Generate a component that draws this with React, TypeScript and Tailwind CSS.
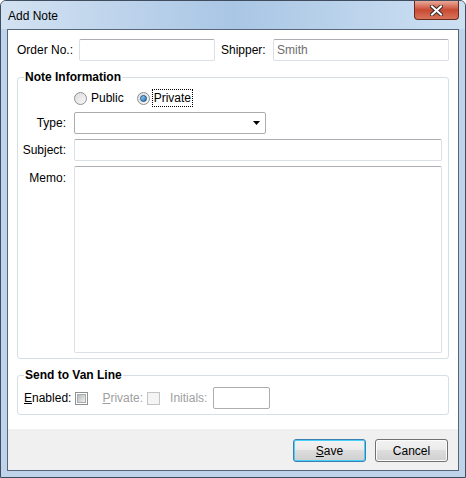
import React from "react";

const font = { fontFamily: '"Liberation Sans", Arial, sans-serif' };

function TextBox({ className = "", value = "", muted = false }: { className?: string; value?: string; muted?: boolean }) {
  return (
    <div
      className={`flex items-center rounded-[2px] border border-[#dbdfe6] border-t-[#abadb3] bg-white pl-[3px] ${
        muted ? "text-[#6d6d6d]" : "text-black"
      } ${className}`}
    >
      {value}
    </div>
  );
}

function Radio({ checked }: { checked?: boolean }) {
  return (
    <span className="flex h-[13px] w-[13px] items-center justify-center rounded-full border border-[#8e8f8f] bg-gradient-to-br from-[#dcdcdc] to-[#f8f8f8]">
      {checked ? (
        <span className="h-[7px] w-[7px] rounded-full border border-[#1b4f7f] bg-gradient-to-br from-[#9fd8f8] to-[#1f6fb0]" />
      ) : null}
    </span>
  );
}

function Check({ disabled }: { disabled?: boolean }) {
  return (
    <span
      className={`flex h-[13px] w-[13px] items-center justify-center border ${
        disabled ? "border-[#c4c4c4] bg-[#f4f4f4]" : "border-[#8e8f8f] bg-white"
      }`}
    >
      {disabled ? null : (
        <span className="h-[9px] w-[9px] border border-[#a8abad] bg-gradient-to-br from-[#b8bbbd] to-[#f0f0f0]" />
      )}
    </span>
  );
}

function Button({ children, isDefault }: { children: React.ReactNode; isDefault?: boolean }) {
  return (
    <button
      type="button"
      className={`relative h-[23px] w-[73px] rounded-[3px] border text-[12px] text-black ${
        isDefault ? "border-[#3c7fb1]" : "border-[#707070]"
      }`}
      style={{
        background: "linear-gradient(#f2f2f2 0%, #ebebeb 45%, #dddddd 50%, #cfcfcf 100%)",
        boxShadow: isDefault ? "inset 0 0 0 1px #48d0f8" : "inset 0 0 0 1px #fcfcfc",
      }}
    >
      {children}
    </button>
  );
}

export default function App() {
  return (
    <div className="h-[478px] w-[466px] bg-white text-[12px] leading-[14px]" style={font}>
      <div className="flex h-[478px] w-[466px] flex-col rounded-t-[6px] border border-[#3f4d5e] bg-[#bfd4eb]">
        {/* title bar */}
        <div className="flex h-[28px] shrink-0 items-start rounded-t-[5px] bg-gradient-to-r from-[#d3e2f2] via-[#a9c6e5] to-[#cde0f2]">
          <span className="ml-[7px] mt-[8px] text-[12px] text-black">Add Note</span>
          <div className="ml-auto mr-[6px] flex h-[19px] w-[45px] items-center justify-center rounded-b-[4px] border border-t-0 border-[#6b2a1e] bg-gradient-to-b from-[#e9a99b] via-[#c84a32] to-[#d8735b]">
            <svg width="13" height="11" viewBox="0 0 13 11">
              <path d="M2 1.5 L11 9.5 M11 1.5 L2 9.5" stroke="#3a2a28" strokeWidth="4" strokeLinecap="square" />
              <path d="M2 1.5 L11 9.5 M11 1.5 L2 9.5" stroke="#ffffff" strokeWidth="2" strokeLinecap="square" />
            </svg>
          </div>
        </div>

        {/* client area */}
        <div className="mx-[6px] flex h-[442px] flex-col border border-[#56667a] bg-white">
          <div className="flex-1 px-[9px] pt-[9px]">
            <div className="flex items-center">
              <span className="w-[62px]">Order No.:</span>
              <TextBox className="h-[22px] w-[136px]" />
              <span className="ml-[6px] w-[52px]">Shipper:</span>
              <TextBox className="h-[22px] w-[176px]" value="Smith" muted />
            </div>

            <fieldset className="mt-[9px] w-[432px] rounded-[3px] border border-[#d5dfe5] pb-[5px] pr-[5px]">
              <legend className="ml-[6px] px-[1px] font-bold">Note Information</legend>
              <div className="mt-[5px] flex h-[18px] items-center pl-[56px]">
                <Radio />
                <span className="ml-[4px]">Public</span>
                <span className="ml-[13px]">
                  <Radio checked />
                </span>
                <span className="ml-[2px] border border-dotted border-black px-[1px] leading-[16px]">Private</span>
              </div>
              <div className="mt-[5px] grid grid-cols-[48px_1fr] gap-x-[8px] gap-y-[5px]">
                <span className="self-center text-right">Type:</span>
                <div className="flex h-[22px] w-[192px] items-center justify-end rounded-[2px] border border-[#acacac] bg-white pr-[5px]">
                  <svg width="7" height="4" viewBox="0 0 7 4">
                    <path d="M0 0 H7 L3.5 4 Z" fill="#000" />
                  </svg>
                </div>
                <span className="self-center text-right">Subject:</span>
                <TextBox className="h-[22px] w-[368px]" />
                <span className="pt-[5px] text-right">Memo:</span>
                <div className="h-[187px] w-[368px] rounded-[2px] border border-[#dbdfe6] border-t-[#abadb3] bg-white" />
              </div>
            </fieldset>

            <fieldset className="mt-[9px] w-[432px] rounded-[3px] border border-[#d5dfe5] pb-[5px]">
              <legend className="ml-[6px] px-[1px] font-bold">Send to Van Line</legend>
              <div className="mt-[5px] flex h-[22px] items-center pl-[6px]">
                <span>
                  <span className="underline">E</span>nabled:
                </span>
                <span className="ml-[4px]">
                  <Check />
                </span>
                <span className="ml-[14px] text-[#a0a0a0]">
                  <span className="underline">P</span>rivate:
                </span>
                <span className="ml-[4px]">
                  <Check disabled />
                </span>
                <span className="ml-[10px] text-[#a0a0a0]">Initials:</span>
                <div className="ml-[6px] h-[22px] w-[57px] rounded-[2px] border border-[#adadad] bg-white" />
              </div>
            </fieldset>
          </div>

          {/* footer */}
          <div className="flex h-[41px] shrink-0 items-start justify-end gap-[9px] bg-[#f0f0f0] pr-[10px] pt-[10px]">
            <Button isDefault>
              <span className="underline">S</span>ave
            </Button>
            <Button>Cancel</Button>
          </div>
        </div>
      </div>
    </div>
  );
}
